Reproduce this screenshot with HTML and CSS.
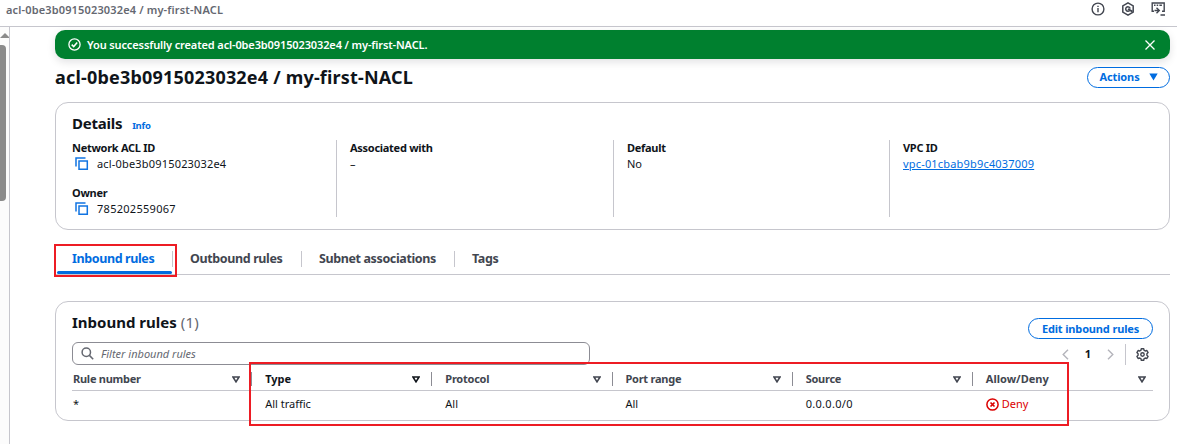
FILE: index.html
```html
<!DOCTYPE html>
<html lang="en">
<head>
<meta charset="utf-8">
<title>my-first-NACL</title>
<link rel="stylesheet" href="styles.css">
</head>
<body>
<header class="topbar">
  <span class="crumb">acl-0be3b0915023032e4 / my-first-NACL</span>
  <div class="tools">
    <svg width="14" height="14" viewBox="0 0 14 14" fill="none" stroke="#424650" stroke-width="1.4"><circle cx="7" cy="7" r="5.9"/><path d="M7 6v4.2M7 3.7v1.4"/></svg>
    <svg width="14" height="14" viewBox="0 0 14 14" fill="none" stroke="#424650" stroke-width="1.5"><path d="M7 .9l5.2 3v6.2L7 13.1l-5.2-3V3.900z"/><path d="M8.600 8.400A2.200 2.200 0 1 1 9.100 6.600"/><path d="M7 7l4.500 2.600" stroke-width="1.800"/></svg>
    <svg width="15" height="14" viewBox="0 0 15 14" fill="none" stroke="#424650" stroke-width="1.4"><path d="M3 9.300H1.200V1h12v8.300H11M3 3.200h1.500M5.700 3.200h1.500M8.400 3.200h2.500M3.500 8.500h4.700M5.500 5.700l2.800 2.800-2.800 2.800M9.500 13h4.500"/></svg>
  </div>
</header>
<div class="shell">
  <aside class="rail"><i class="arrow"></i><i class="thumb"></i></aside>
  <main class="main">
    <div class="flash">
      <svg width="13" height="13" viewBox="0 0 13 13" fill="none" stroke="#fff" stroke-width="1.300"><circle cx="6.500" cy="6.500" r="5.600"/><path d="M3.700 6.600l2 2 3.500-4" stroke-width="1.500"/></svg>
      <span class="flash-text">You successfully created acl-0be3b0915023032e4 / my-first-NACL.</span>
      <svg class="close" width="10" height="10" viewBox="0 0 10 10" fill="none" stroke="#fff" stroke-width="1.300"><path d="M.5.500l9 9M9.500.500l-9 9"/></svg>
    </div>
    <div class="title-row">
      <h1 class="title">acl-0be3b0915023032e4 / my-first-NACL</h1>
      <button class="btn actions"><span>Actions</span><svg width="9" height="8" viewBox="0 0 9 8"><path d="M.3.500h8.400L4.500 7.500z" fill="#006ce0"/></svg></button>
    </div>
    <section class="card details">
      <div class="card-head"><h2 class="h2 details-title">Details</h2><a class="info">Info</a></div>
      <div class="cols">
        <div class="col">
          <div class="label">Network ACL ID</div>
          <div class="value"><svg class="copy" width="14" height="14" viewBox="0 0 14 14" fill="none" stroke="#1174e2" stroke-width="1.500"><path d="M1 9.500V1h9.500"/><path d="M4 4h8.300v8.300H4z"/></svg><span class="acl-value">acl-0be3b0915023032e4</span></div>
          <div class="label owner-label">Owner</div>
          <div class="value"><svg class="copy" width="14" height="14" viewBox="0 0 14 14" fill="none" stroke="#1174e2" stroke-width="1.500"><path d="M1 9.500V1h9.500"/><path d="M4 4h8.300v8.300H4z"/></svg><span class="owner-value">785202559067</span></div>
        </div>
        <div class="col"><div class="label">Associated with</div><div class="value">–</div></div>
        <div class="col"><div class="label">Default</div><div class="value">No</div></div>
        <div class="col"><div class="label">VPC ID</div><div class="value"><a class="link">vpc-01cbab9b9c4037009</a></div></div>
      </div>
    </section>
    <nav class="tabs">
      <div class="tab active"><span>Inbound rules</span></div>
      <div class="tab"><span>Outbound rules</span></div>
      <div class="tab"><span>Subnet associations</span></div>
      <div class="tab"><span>Tags</span></div>
    </nav>
    <section class="card rules">
      <div class="rules-head">
        <h2 class="h2 rules-title">Inbound rules <span class="count">(1)</span></h2>
        <button class="btn edit"><span>Edit inbound rules</span></button>
      </div>
      <div class="filter-row">
        <div class="search">
          <svg width="13" height="13" viewBox="0 0 13 13" fill="none" stroke="#656871" stroke-width="1.500"><circle cx="5.300" cy="5.300" r="4.200"/><path d="M8.400 8.400l3.800 3.800"/></svg>
          <span class="placeholder">Filter inbound rules</span>
        </div>
        <div class="pager">
          <svg width="7" height="11" viewBox="0 0 7 11" fill="none" stroke="#b4b4bb" stroke-width="1.400"><path d="M6 .800L1.200 5.500 6 10.200"/></svg>
          <span class="page">1</span>
          <svg width="7" height="11" viewBox="0 0 7 11" fill="none" stroke="#b4b4bb" stroke-width="1.400"><path d="M1 .800l4.800 4.700L1 10.200"/></svg>
          <div class="gear"><svg width="13" height="13" viewBox="0 0 13 13" fill="none" stroke="#424650" stroke-width="1.400" stroke-linejoin="round"><path d="M5.300 .800h2.400l.4 1.500 1.200.700 1.600-.500 1.200 2.100-1.200 1.200v1.400l1.200 1.200-1.200 2.100-1.600-.500-1.200.700-.4 1.500H5.300l-.4-1.500-1.200-.700-1.600.500L.900 8.400l1.200-1.200V5.800L.900 4.600l1.200-2.100 1.600.500 1.200-.700z"/><circle cx="6.500" cy="6.500" r="1.700"/></svg></div>
        </div>
      </div>
      <div class="table">
        <div class="row thead">
          <div class="cell"><span class="tight">Rule number</span><svg class="caret" width="8" height="7" viewBox="0 0 8 7"><path d="M1 1h6L4 5.800z"/></svg></div>
          <div class="cell sorted"><span>Type</span><svg class="caret" width="8" height="7" viewBox="0 0 8 7"><path d="M1 1h6L4 5.800z"/></svg></div>
          <div class="cell"><span class="tight">Protocol</span><svg class="caret" width="8" height="7" viewBox="0 0 8 7"><path d="M1 1h6L4 5.800z"/></svg></div>
          <div class="cell"><span class="tight">Port range</span><svg class="caret" width="8" height="7" viewBox="0 0 8 7"><path d="M1 1h6L4 5.800z"/></svg></div>
          <div class="cell"><span class="tight">Source</span><svg class="caret" width="8" height="7" viewBox="0 0 8 7"><path d="M1 1h6L4 5.800z"/></svg></div>
          <div class="cell"><span>Allow/Deny</span><svg class="caret" width="8" height="7" viewBox="0 0 8 7"><path d="M1 1h6L4 5.800z"/></svg></div>
        </div>
        <div class="row tbody">
          <div class="cell">*</div>
          <div class="cell">All traffic</div>
          <div class="cell">All</div>
          <div class="cell">All</div>
          <div class="cell source">0.0.0.0/0</div>
          <div class="cell deny"><svg width="13" height="13" viewBox="0 0 13 13" fill="none" stroke="#db0000" stroke-width="1.500"><circle cx="6.500" cy="6.500" r="5.600"/><path d="M4.500 4.500l4 4M8.500 4.500l-4 4" stroke-width="1.700"/></svg><span>Deny</span></div>
        </div>
      </div>
    </section>
  </main>
</div>
<div class="mark mark-tab"></div>
<div class="mark mark-table"></div>
</body>
</html>
```
FILE: styles.css
```css
* { box-sizing: border-box; }
body { margin: 0; width: 1177px; height: 444px; overflow: hidden; background: #fff; color: #0f141a; font: 11px/16px "Noto Sans", "Open Sans", sans-serif; position: relative; white-space: nowrap; }
svg { display: block; flex: none; }
h1, h2 { margin: 0; }
.topbar { height: 27px; border-bottom: 1px solid #c6c6cd; display: flex; justify-content: space-between; padding: 2px 11px 0 6px; }
.crumb { color: #656871; font-weight: 600; letter-spacing: .15px; }
.tools { display: flex; gap: 16px; }
.shell { display: flex; height: 417px; }
.rail { width: 10px; border-right: 1px solid #c6c6cd; background: #fcfcfc; flex: none; padding-top: 6px; overflow: hidden; }
.arrow { display: block; width: 0; border: 5px solid transparent; border-top: 0; border-bottom-color: #8b8b8b; }
.thumb { display: block; width: 6px; height: 156px; margin-top: 7px; background: #8b8b8b; border-radius: 0 4px 4px 0; }
.main { margin-left: 45px; width: 1115px; padding-top: 3px; }
.flash { height: 29px; background: #00802f; border-radius: 10px; color: #fff; display: flex; align-items: center; padding: 0 15px 0 13px; box-shadow: 0 3px 8px rgba(0, 7, 22, .12); }
.flash-text { margin-left: 6px; font-weight: 600; letter-spacing: -.12px; }
.close { margin-left: auto; }
.title-row { height: 43px; padding-top: 6px; display: flex; justify-content: space-between; }
.title { font-size: 18px; line-height: 24px; font-weight: 700; letter-spacing: .19px; }
.btn { border: 1px solid #006ce0; border-radius: 12px; background: #fff; color: #006ce0; font: 700 11px/16px "Noto Sans", sans-serif; height: 21px; padding: 0; display: flex; align-items: center; justify-content: center; }
.actions { width: 83px; margin-top: 2px; gap: 9px; padding-bottom: 1px; letter-spacing: -.1px; }
.card { border: 1px solid #c6c6cd; border-radius: 13px; padding: 0 16px; }
.details { height: 128px; padding-top: 9px; }
.card-head { display: flex; align-items: baseline; gap: 10px; height: 28px; }
.h2 { font-size: 15px; line-height: 22px; font-weight: 700; }
.details-title { letter-spacing: -.25px; }
.info { color: #006ce0; font-weight: 700; font-size: 9.500px; letter-spacing: -.25px; }
.cols { display: grid; grid-template-columns: 264px 277px 276px 264px; height: 77px; }
.col + .col { border-left: 1px solid #c6c6cd; padding-left: 13px; }
.label { font-weight: 700; letter-spacing: -.28px; }
.value { display: flex; height: 16px; align-items: center; }
.copy { margin: 0 8px 1px 3px; }
.acl-value, .link { letter-spacing: .18px; }
.owner-value { letter-spacing: .28px; }
.owner-label { margin-top: 13px; }
.link { color: #006ce0; text-decoration: underline; }
.tabs { height: 45px; border-bottom: 1px solid #c6c6cd; display: flex; padding-top: 21px; }
.tab { height: 23px; position: relative; font-size: 12.500px; font-weight: 700; color: #424650; line-height: 15px; padding-left: 17px; letter-spacing: -.38px; }
.tab:not(:last-child)::after { content: ""; position: absolute; right: 0; top: 0; height: 16px; width: 1px; background: #c6c6cd; }
.tab:nth-child(1) { width: 118px; }
.tab:nth-child(2) { width: 129px; }
.tab:nth-child(3) { width: 153px; }
.active { color: #006ce0; }
.active::before { content: ""; position: absolute; left: 2px; right: 1px; top: 20px; height: 3px; border-radius: 2px; background: #006ce0; }
.rules { margin-top: 26px; height: 120px; padding-top: 9px; }
.rules-head { display: flex; justify-content: space-between; height: 31px; }
.count { font-weight: 400; color: #656871; letter-spacing: .3px; }
.edit { width: 125px; margin-top: 7px; letter-spacing: -.15px; }
.filter-row { display: flex; justify-content: space-between; }
.search { width: 518px; height: 23px; border: 1px solid #8c8c94; border-radius: 6px; display: flex; align-items: center; padding-left: 8px; }
.placeholder { margin-left: 7px; font-style: italic; color: #656871; }
.pager { display: flex; align-items: center; height: 24px; margin-bottom: -1px; }
.page { font-weight: 700; margin: 0 16px; }
.gear { border-left: 1px solid #c6c6cd; height: 21px; margin-left: 11px; padding: 4px 4px 0 10px; }
.row { display: grid; grid-template-columns: repeat(6, 1fr); }
.thead { height: 26px; border-bottom: 1px solid #c6c6cd; font-weight: 700; color: #424650; }
.tight { letter-spacing: -.25px; }
.cell { display: flex; align-items: center; padding-left: 13px; position: relative; }
.cell:first-child { padding-left: 1px; }
.thead .cell { padding-right: 12px; justify-content: space-between; height: 25px; padding-top: 3px; }
.thead .cell:last-child { padding-right: 7px; }
.thead .cell:not(:last-child)::after { content: ""; position: absolute; right: 0; top: 7px; height: 14px; width: 1px; background: #8c8c94; }
.caret { fill: none; stroke: #424650; stroke-width: 1.600; }
.sorted { color: #0f141a; }
.sorted .caret { stroke: #0f141a; }
.tbody { height: 26px; }
.source { letter-spacing: .3px; }
.deny { color: #db0000; gap: 3px; }
.mark { position: absolute; border: 2px solid #ed1c24; }
.mark-tab { left: 54px; top: 244px; width: 123px; height: 33px; }
.mark-table { left: 249px; top: 362px; width: 820px; height: 64px; }
```
